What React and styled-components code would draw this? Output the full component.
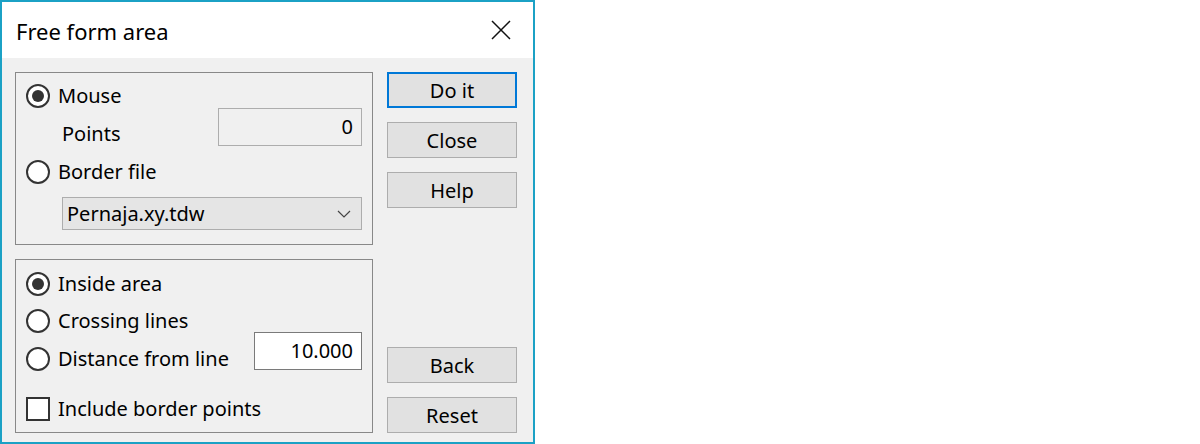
import React from 'react'
import styled, { createGlobalStyle } from 'styled-components'

const GlobalStyle = createGlobalStyle`
  body {
    margin: 0;
    background: #fff;
    font-family: "Noto Sans", "Open Sans", sans-serif;
    color: #000;
  }
`

const Window = styled.div`
  width: 535px;
  height: 444px;
  box-sizing: border-box;
  border: 2px solid #1ba1c5;
  background: #f0f0f0;
  display: flex;
  flex-direction: column;
`

const TitleBar = styled.div`
  height: 56px;
  flex: none;
  background: #fff;
  display: flex;
  align-items: center;
  justify-content: space-between;
  padding: 0 22px 0 14px;
`

const Title = styled.div`
  font-size: 22px;
  margin-top: 2px;
`

const CloseIcon = styled.svg`
  width: 20px;
  height: 20px;
  display: block;
`

const Body = styled.div`
  flex: 1;
  display: flex;
  gap: 14px;
  padding: 14px 16px 10px 13px;
`

const LeftColumn = styled.div`
  width: 358px;
  display: flex;
  flex-direction: column;
  gap: 14px;
`

const Group = styled.div`
  box-sizing: border-box;
  height: ${(p) => p.$height}px;
  border: 1px solid #888;
  padding: ${(p) => p.$top}px 10px 0 10px;
  display: flex;
  flex-direction: column;
`

const Row = styled.div`
  display: flex;
  align-items: ${(p) => p.$align || 'center'};
  justify-content: space-between;
  margin-top: ${(p) => p.$gap || 0}px;
`

const Option = styled.label`
  display: flex;
  align-items: center;
  gap: 8px;
  font-size: 20px;
  height: 24px;
  line-height: 24px;
`

const Radio = styled.span`
  width: 24px;
  height: 24px;
  box-sizing: border-box;
  border-radius: 50%;
  border: 2px solid #333;
  background: #fff;
  display: flex;
  align-items: center;
  justify-content: center;
  flex: none;
  &::after {
    content: '';
    width: 12px;
    height: 12px;
    border-radius: 50%;
    background: #333;
    display: ${(p) => (p.$checked ? 'block' : 'none')};
  }
`

const Checkbox = styled.span`
  width: 24px;
  height: 24px;
  box-sizing: border-box;
  border: 2px solid #333;
  background: #fff;
  flex: none;
`

const FieldLabel = styled.span`
  font-size: 20px;
  padding-left: 36px;
  margin-top: 12px;
`

const NumberField = styled.div`
  box-sizing: border-box;
  width: ${(p) => p.$width}px;
  height: 38px;
  border: 1px solid ${(p) => (p.$readOnly ? '#adadad' : '#7a7a7a')};
  background: ${(p) => (p.$readOnly ? '#f0f0f0' : '#fff')};
  font-size: 20px;
  text-align: right;
  padding: 0 8px;
  line-height: 35px;
  margin-bottom: ${(p) => p.$lift || 0}px;
`

const Dropdown = styled.div`
  box-sizing: border-box;
  margin: 13px 0 0 36px;
  height: 33px;
  border: 1px solid #adadad;
  background: #e5e5e5;
  display: flex;
  align-items: center;
  justify-content: space-between;
  padding: 0 10px 0 4px;
  font-size: 20px;
`

const Chevron = styled.svg`
  width: 14px;
  height: 8px;
  display: block;
`

const ButtonColumn = styled.div`
  width: 130px;
  display: flex;
  flex-direction: column;
  gap: 14px;
`

const Button = styled.button`
  box-sizing: border-box;
  height: 36px;
  width: 100%;
  background: #e1e1e1;
  border: ${(p) => (p.$default ? '2px solid #0078d7' : '1px solid #adadad')};
  font-family: inherit;
  font-size: 20px;
  color: #000;
  padding: 0;
  margin-top: ${(p) => (p.$pushDown ? 'auto' : '0')};
`

export default function App() {
  return (
    <>
      <GlobalStyle />
      <Window>
        <TitleBar>
          <Title>Free form area</Title>
          <CloseIcon viewBox="0 0 20 20">
            <path d="M1 1 L19 19 M19 1 L1 19" stroke="#111" strokeWidth="1.5" fill="none" />
          </CloseIcon>
        </TitleBar>
        <Body>
          <LeftColumn>
            <Group $height={173} $top={11}>
              <Option>
                <Radio $checked />
                Mouse
              </Option>
              <Row $align="flex-start">
                <FieldLabel>Points</FieldLabel>
                <NumberField $width={144} $readOnly>0</NumberField>
              </Row>
              <Row $gap={13}>
                <Option>
                  <Radio />
                  Border file
                </Option>
              </Row>
              <Dropdown>
                <span>Pernaja.xy.tdw</span>
                <Chevron viewBox="0 0 14 8">
                  <path d="M1 1 L7 7 L13 1" stroke="#444" strokeWidth="1.2" fill="none" />
                </Chevron>
              </Dropdown>
            </Group>
            <Group $height={174} $top={12}>
              <Option>
                <Radio $checked />
                Inside area
              </Option>
              <Row $gap={13}>
                <Option>
                  <Radio />
                  Crossing lines
                </Option>
              </Row>
              <Row $align="flex-end" $gap={-1}>
                <Option>
                  <Radio />
                  Distance from line
                </Option>
                <NumberField $width={108} $lift={1}>10.000</NumberField>
              </Row>
              <Row $gap={26}>
                <Option>
                  <Checkbox />
                  Include border points
                </Option>
              </Row>
            </Group>
          </LeftColumn>
          <ButtonColumn>
            <Button $default>Do it</Button>
            <Button>Close</Button>
            <Button>Help</Button>
            <Button $pushDown>Back</Button>
            <Button>Reset</Button>
          </ButtonColumn>
        </Body>
      </Window>
    </>
  )
}
